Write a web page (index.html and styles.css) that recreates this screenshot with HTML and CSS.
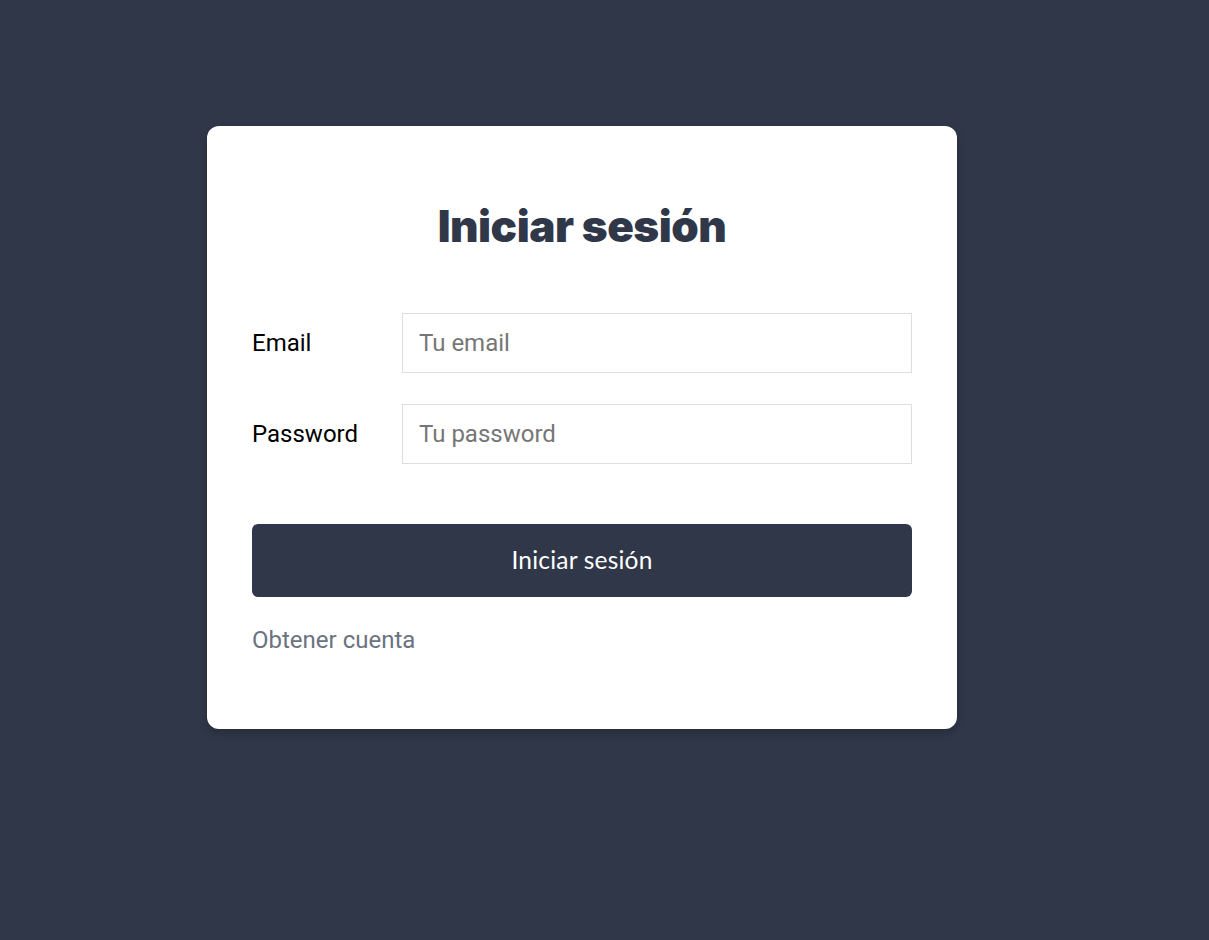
FILE: index.html
```html
<!DOCTYPE html>
<html lang="es">
<head>
<meta charset="utf-8">
<title>Iniciar sesión</title>
<link rel="stylesheet" href="styles.css">
</head>
<body>
<main class="page">
  <section class="card">
    <h1 class="title">Iniciar sesión</h1>
    <form class="form">
      <div class="field">
        <label class="label" for="email">Email</label>
        <input class="input" id="email" type="email" placeholder="Tu email">
      </div>
      <div class="field">
        <label class="label" for="password">Password</label>
        <input class="input" id="password" type="password" placeholder="Tu password">
      </div>
      <button class="button" type="button">Iniciar sesión</button>
    </form>
    <a class="link" href="#">Obtener cuenta</a>
  </section>
</main>
</body>
</html>
```

FILE: styles.css
```css
* { box-sizing: border-box; }
html, body { margin: 0; padding: 0; }
body {
  background: #2f3749;
  font-family: Roboto, "Liberation Sans", sans-serif;
  min-height: 940px;
}
.page {
  padding: 126px 0 0 207px;
}
.card {
  width: 750px;
  background: #ffffff;
  border-radius: 12px;
  padding: 72px 45px 71px;
  box-shadow: 0 4px 8px rgba(0, 0, 0, 0.2);
}
.title {
  margin: 0 0 59px;
  text-align: center;
  font-family: Inter, Lato, sans-serif;
  font-weight: 900;
  font-size: 44px;
  line-height: 56px;
  letter-spacing: -0.5px;
  color: #2f3749;
}
.form {
  display: flex;
  flex-direction: column;
  gap: 31px;
}
.field {
  display: flex;
  align-items: center;
}
.label {
  width: 150px;
  flex: none;
  font-size: 24px;
  color: #000;
}
.input {
  flex: 1;
  height: 60px;
  border: 1px solid #dedede;
  border-radius: 0;
  padding: 0 16px;
  font-family: Roboto, sans-serif;
  font-size: 24px;
  color: #333;
  outline: none;
}
.input::placeholder { color: #767676; }
.button {
  margin-top: 29px;
  height: 73px;
  border: none;
  border-radius: 6px;
  background: #2f3749;
  color: #ffffff;
  padding: 0 0 3px;
  font-family: Lato, "Open Sans", sans-serif;
  font-size: 24.5px;
  letter-spacing: 0.2px;
  cursor: pointer;
}
.link {
  display: block;
  margin-top: 25px;
  font-size: 24px;
  line-height: 36px;
  color: #6b7280;
  text-decoration: none;
}
```
